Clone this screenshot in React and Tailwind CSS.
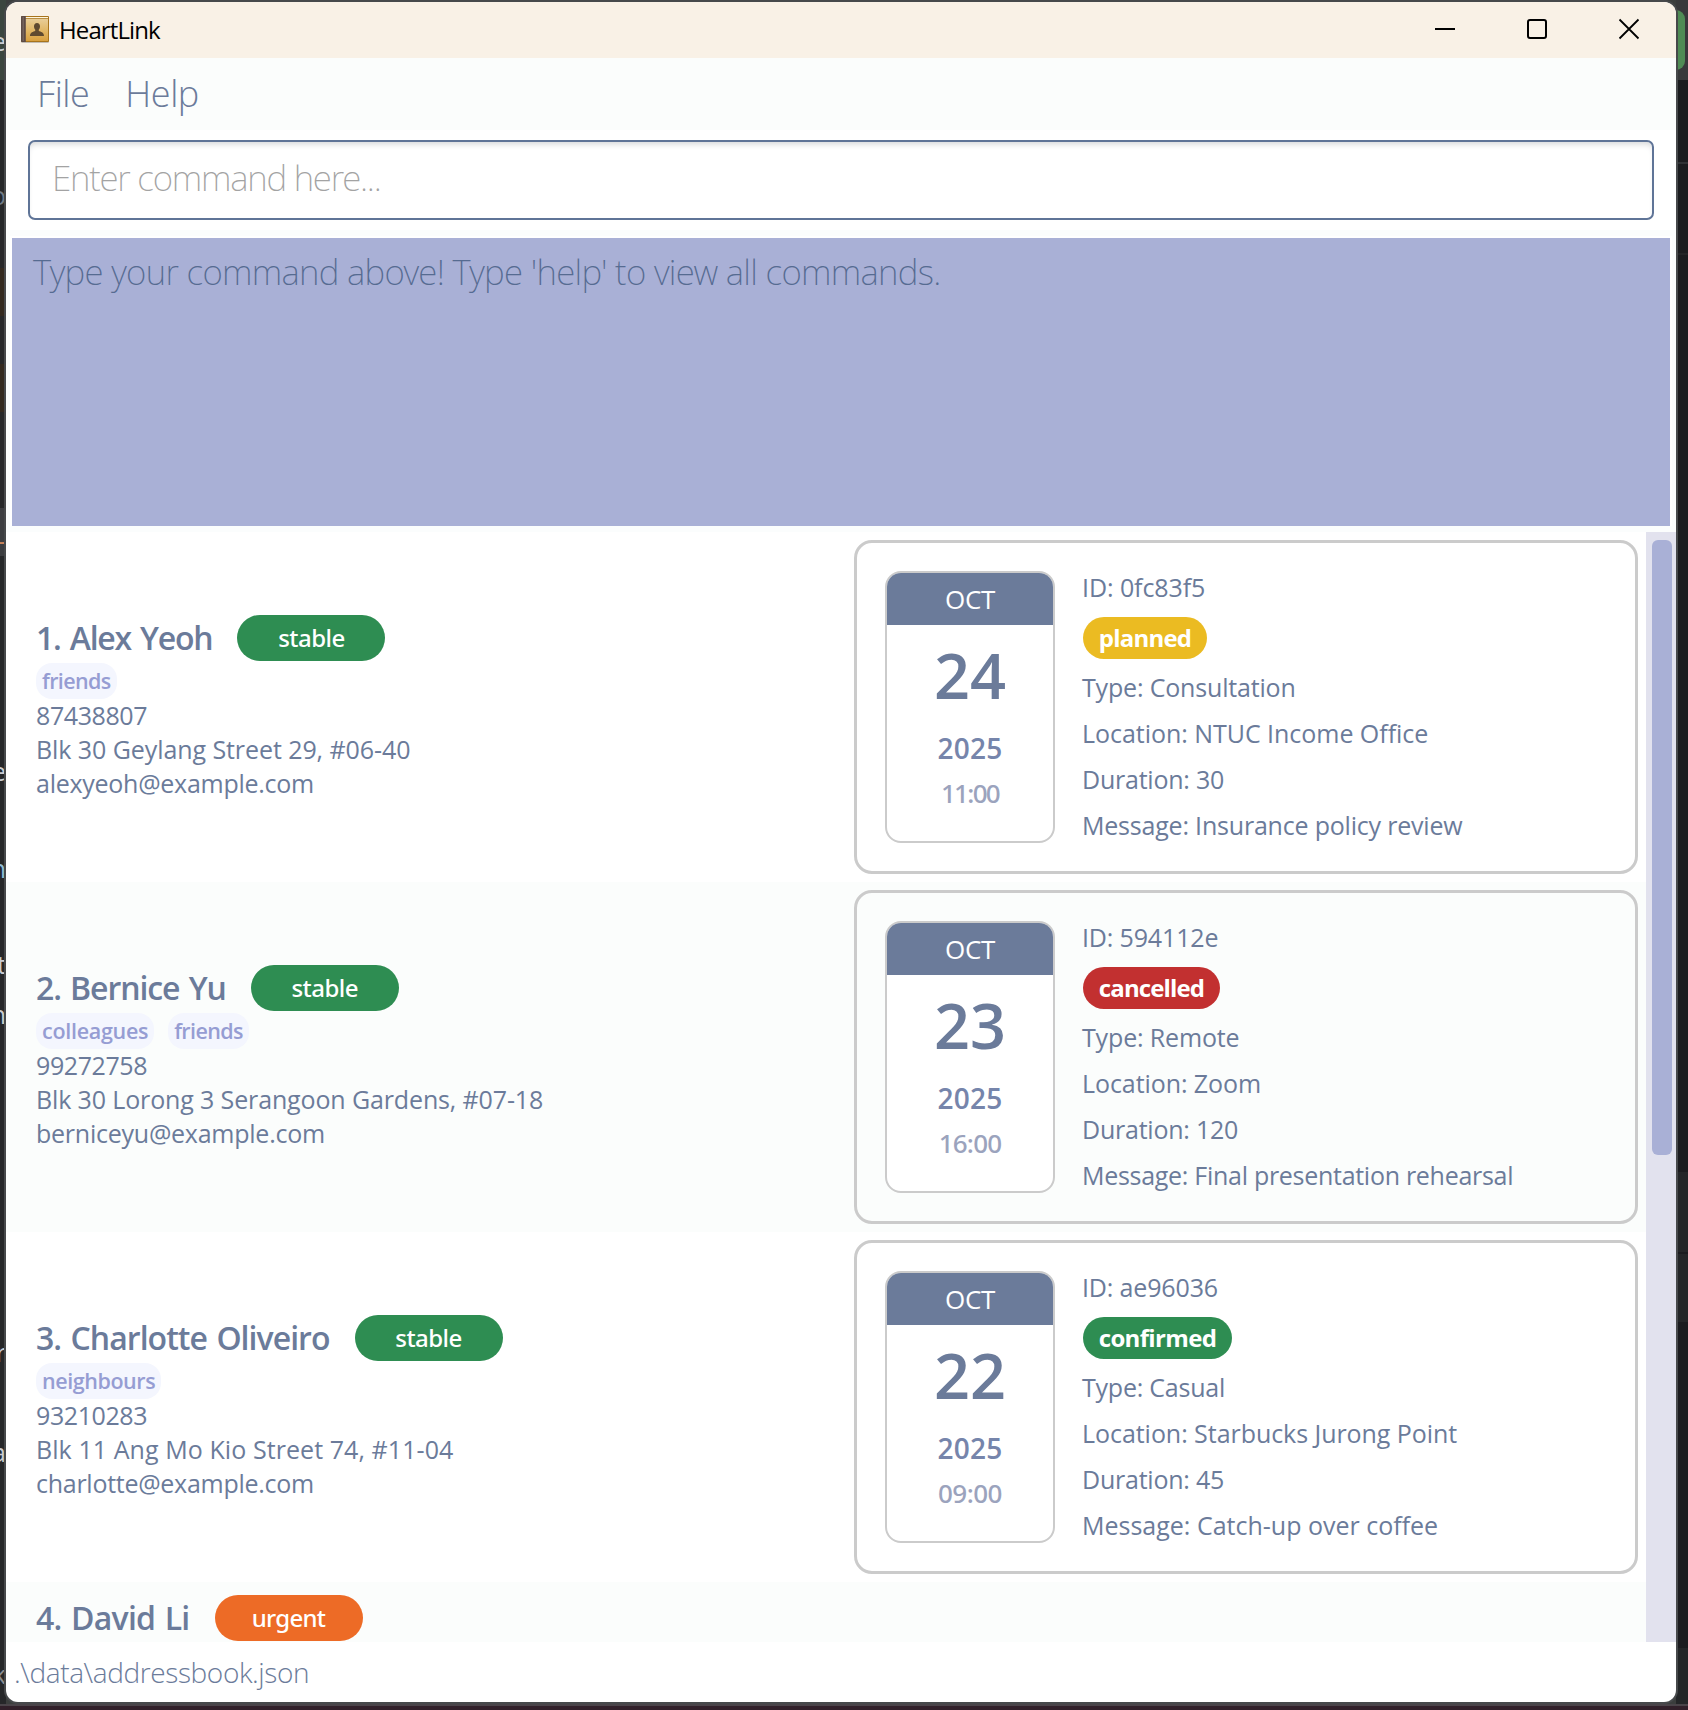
import React from "react";

const SANS = "font-['Open_Sans','Noto_Sans',sans-serif]";

const STATUS = { stable: "bg-[#2e8d52]", urgent: "bg-[#ed6b26]" };
const STATUS_TRACKING = { stable: "tracking-[-0.022em]", urgent: "tracking-[-0.03em]" };

const people = [
  {
    name: "1. Alex Yeoh",
    nameTracking: "tracking-[-0.038em]",
    status: "stable",
    tags: [["friends", "tracking-[-0.028em]"]],
    lines: [
      ["87438807", "tracking-[-0.016em]"],
      ["Blk 30 Geylang Street 29, #06-40", "tracking-[-0.003em]"],
      ["alexyeoh@example.com", "tracking-[-0.0106em]"],
    ],
    appt: {
      day: "24",
      time: "11:00",
      timeTracking: "tracking-[-0.065em]",
      id: ["ID: 0fc83f5", "tracking-[-0.003em]"],
      state: "planned",
      stateClass: "w-[124px] bg-[#ebbb22] tracking-[-0.033em]",
      rows: [
        ["Type: Consultation", "tracking-[-0.007em]"],
        ["Location: NTUC Income Office", "tracking-[-0.0015em]"],
        ["Duration: 30", "tracking-[-0.009em]"],
        ["Message: Insurance policy review", "tracking-[-0.008em]"],
      ],
    },
  },
  {
    name: "2. Bernice Yu",
    nameTracking: "tracking-[-0.034em]",
    status: "stable",
    tags: [
      ["colleagues", "tracking-[-0.0135em]"],
      ["friends", "tracking-[-0.028em]"],
    ],
    lines: [
      ["99272758", "tracking-[-0.016em]"],
      ["Blk 30 Lorong 3 Serangoon Gardens, #07-18", "tracking-[-0.0053em]"],
      ["berniceyu@example.com", "tracking-[-0.0097em]"],
    ],
    appt: {
      day: "23",
      time: "16:00",
      timeTracking: "tracking-[-0.03em]",
      id: ["ID: 594112e", "tracking-[-0.006em]"],
      state: "cancelled",
      stateClass: "w-[137px] bg-[#c23030] tracking-[-0.0362em]",
      rows: [
        ["Type: Remote", "tracking-[-0.006em]"],
        ["Location: Zoom", "tracking-[-0.003em]"],
        ["Duration: 120", "tracking-[-0.009em]"],
        ["Message: Final presentation rehearsal", "tracking-[-0.0114em]"],
      ],
    },
  },
  {
    name: "3. Charlotte Oliveiro",
    nameTracking: "tracking-[-0.03em]",
    status: "stable",
    tags: [["neighbours", "tracking-[-0.02em]"]],
    lines: [
      ["93210283", "tracking-[-0.016em]"],
      ["Blk 11 Ang Mo Kio Street 74, #11-04", "tracking-[0.003em]"],
      ["charlotte@example.com", "tracking-[-0.0108em]"],
    ],
    appt: {
      day: "22",
      time: "09:00",
      timeTracking: "tracking-[-0.02em]",
      id: ["ID: ae96036", "tracking-[-0.006em]"],
      state: "confirmed",
      stateClass: "w-[149px] bg-[#2e8d52] tracking-[-0.0272em]",
      rows: [
        ["Type: Casual", "tracking-[-0.009em]"],
        ["Location: Starbucks Jurong Point", "tracking-[-0.002em]"],
        ["Duration: 45", "tracking-[-0.009em]"],
        ["Message: Catch-up over coffee", "tracking-[0em]"],
      ],
    },
  },
];

function BookIcon() {
  return (
    <svg width="30" height="28" viewBox="0 0 30 28" className="shrink-0">
      <defs>
        <linearGradient id="cover" x1="0" y1="0" x2="0" y2="1">
          <stop offset="0" stopColor="#e8cd98" />
          <stop offset="0.5" stopColor="#e2b868" />
          <stop offset="1" stopColor="#d8a040" />
        </linearGradient>
      </defs>
      <rect x="1" y="24" width="28" height="3" rx="1.5" fill="#000" opacity="0.22" />
      <rect x="1" y="0" width="28" height="26" rx="1" fill="#a8741c" />
      <rect x="5" y="1" width="23" height="1.2" fill="#fff6dd" />
      <rect x="5" y="3" width="23" height="22" fill="url(#cover)" />
      <path d="M1 1 q0-1 1-1 H5.8 V26 H2 q-1 0-1-1z" fill="#5d4b46" />
      <rect x="2.6" y="1" width="1.2" height="24" fill="#7b6a63" />
      <path
        d="M17 7c-1.9 0-3 1.3-3 3.2 0 1.500.5 2.600 1.200 3.300v1.500c-1.800.7-5.200 1.300-5.200 5h14c0-3.700-3.400-4.300-5.200-5v-1.500c.7-.7 1.200-1.800 1.200-3.300C20 8.300 18.900 7 17 7z"
        fill="#5f4a30"
      />
    </svg>
  );
}

function TitleBar() {
  return (
    <div className="flex h-14 shrink-0 items-center bg-[#f9f1e6] pl-[14px] text-black">
      <BookIcon />
      <span className="ml-[9px] text-[24px] leading-[56px] tracking-[-0.0374em]">HeartLink</span>
      <div className="mr-9 ml-auto flex items-center gap-[70px] pb-[2px]">
        <svg width="22" height="22" viewBox="0 0 22 22">
          <path d="M1 11H21" stroke="#000" strokeWidth="2" />
        </svg>
        <svg width="22" height="22" viewBox="0 0 22 22">
          <rect x="2" y="2" width="18" height="18" rx="2" fill="none" stroke="#000" strokeWidth="2" />
        </svg>
        <svg width="22" height="22" viewBox="0 0 22 22">
          <path d="M1.500 1.500 20.500 20.500M20.500 1.500 1.500 20.500" stroke="#000" strokeWidth="1.800" />
        </svg>
      </div>
    </div>
  );
}

function Header({ name, tracking, status }) {
  return (
    <div className="flex h-[46px] shrink-0 items-center">
      <span className={`pb-[1px] text-[32px] leading-[44px] font-semibold [word-spacing:2px] ${tracking}`}>{name}</span>
      <span
        className={`ml-[25px] flex h-[46px] w-[148px] items-center justify-center rounded-[23px] font-['Noto_Sans'] text-[24px] font-medium text-white ${STATUS_TRACKING[status]} ${STATUS[status]}`}
      >
        {status}
      </span>
    </div>
  );
}

function Appointment({ appt }) {
  return (
    <div className="flex h-[334px] w-[784px] rounded-[18px] border-[3px] border-[#cbcbcb] p-7">
      <div className="flex w-[170px] shrink-0 flex-col items-center overflow-hidden rounded-[16px] border-2 border-[#cbcbcb] bg-white">
        <div className="flex h-[52px] w-full items-center justify-center bg-[#6b7b9a] text-[26px] tracking-[-0.0115em] text-white">
          OCT
        </div>
        <div className="mt-[10px] text-[63px] leading-[80px] font-semibold">{appt.day}</div>
        <div className="mt-[11px] text-[28px] leading-[44px] font-semibold tracking-[0.01em] text-[#7685ab]">2025</div>
        <div className={`font-['Noto_Sans'] text-[26px] leading-[46px] font-medium text-[#9ba3bd] ${appt.timeTracking}`}>
          {appt.time}
        </div>
      </div>
      <div className="ml-[27px] flex flex-col text-[25px] leading-8 whitespace-nowrap">
        <div className={appt.id[1]}>{appt.id[0]}</div>
        <div
          className={`mt-[14px] mb-3 ml-[1px] flex h-[42px] items-center justify-center rounded-full text-[24px] font-bold text-white ${appt.stateClass}`}
        >
          {appt.state}
        </div>
        <div className="flex flex-col gap-[14px]">
          {appt.rows.map(([text, tracking]) => (
            <div key={text} className={tracking}>
              {text}
            </div>
          ))}
        </div>
      </div>
    </div>
  );
}

function PersonRow({ person, shaded }) {
  return (
    <div className={`flex h-[350px] shrink-0 items-center justify-between pr-2 pl-[30px] ${shaded ? "bg-[#fbfdfc]" : "bg-white"}`}>
      <div className="flex flex-col pt-[2px] whitespace-nowrap">
        <Header name={person.name} tracking={person.nameTracking} status={person.status} />
        <div className="mt-[2px] flex gap-[14px]">
          {person.tags.map(([tag, tracking]) => (
            <span
              key={tag}
              className={`flex h-9 items-center rounded-[16px] bg-[#f4f6fe] px-[6px] text-[21.5px] font-semibold text-[#969dd3] ${tracking}`}
            >
              {tag}
            </span>
          ))}
        </div>
        <div className="-mt-px mb-px flex flex-col text-[25px] leading-[34px]">
          {person.lines.map(([text, tracking]) => (
            <span key={text} className={tracking}>
              {text}
            </span>
          ))}
        </div>
      </div>
      <Appointment appt={person.appt} />
    </div>
  );
}

function Fragment({ height, glyph, color = "text-[#c9ccd1]", bg = "bg-[#262729]" }) {
  return (
    <div className={`flex shrink-0 items-end justify-end overflow-hidden text-[25px] leading-8 ${bg} ${color}`} style={{ height }}>
      {glyph}
    </div>
  );
}

function LeftStrip() {
  return (
    <div className="flex w-[6px] shrink-0 flex-col overflow-hidden">
      <Fragment height={57} glyph="e" bg="bg-[#3b463f]" />
      <Fragment height={23} bg="bg-[#3b463f]" />
      <Fragment height={131} glyph="o" color="text-[#6f7a86]" />
      <Fragment height={57} />
      <Fragment height={48} bg="bg-[#33291f]" />
      <Fragment height={48} />
      <Fragment height={48} bg="bg-[#33291f]" />
      <Fragment height={96} />
      <Fragment height={48} glyph="-" color="text-[#c9835a]" bg="bg-[#3c3d40]" />
      <Fragment height={231} glyph="e" />
      <Fragment height={97} glyph="n" color="text-[#8fbbd6]" />
      <Fragment height={96} glyph="t" />
      <Fragment height={50} glyph="n" />
      <Fragment height={338} glyph="r" />
      <Fragment height={100} glyph="a" />
      <Fragment height={222} glyph="k" color="text-[#8b8d91]" />
      <Fragment height={14} />
    </div>
  );
}

function RightStrip() {
  return (
    <div className="flex w-3 shrink-0 flex-col bg-[#1b1c1f]">
      <div className="h-20 shrink-0 bg-[#38393b] pt-[10px]">
        <div className="h-[60px] w-[9px] rounded-r-[9px] bg-[#4f8c55]" />
      </div>
      <div className="mt-[82px] h-[2px] shrink-0 bg-[#303235]" />
      <div className="mt-[89px] h-[2px] shrink-0 bg-[#242527]" />
      <div className="mt-[917px] h-[80px] shrink-0 bg-[#242628]" />
      <div className="mt-[2px] h-[68px] shrink-0 bg-[#242628]" />
      <div className="mt-[326px] grow bg-[#242628]" />
    </div>
  );
}

export default function App() {
  return (
    <div className={`flex h-[1710px] w-[1688px] flex-col overflow-hidden bg-[#262729] text-[#6b7b9a] ${SANS}`}>
      <div className="flex h-[1704px] shrink-0">
        <LeftStrip />
        <div className="z-10 flex w-[1670px] shrink-0 flex-col bg-[#3b3e3d] pt-[2px] pb-[2px]">
          <div className="flex h-[1700px] flex-col overflow-hidden rounded-[12px] bg-white shadow-[0_0_0_2px_#47494b]">
            <TitleBar />
            <div className="flex h-[72px] shrink-0 items-center gap-[36px] bg-[#fbfdfc] pb-px pl-[31px] text-[36px] font-light">
              <span className="tracking-[-0.0126em]">File</span>
              <span className="tracking-[-0.012em]">Help</span>
            </div>
            <div className="h-[100px] shrink-0 bg-white px-[22px] py-[10px]">
              <div className="flex h-20 items-center rounded-[7px] border-2 border-[#5f7497] bg-white pb-[3px] pl-[22px] font-['Noto_Sans'] text-[35px] font-extralight tracking-[-0.035em] text-[#a3a3a3] shadow-[inset_0_5px_6px_-3px_#d4d6d8]">
                Enter command here...
              </div>
            </div>
            <div className="shrink-0 bg-[#fbfdfd] px-[4px] pt-[6px] pb-[6px]">
              <div className="bg-white p-[2px] pb-0">
                <div className="h-[288px] bg-[#a9b0d6] pt-[10px] pl-[21px] font-['Noto_Sans'] text-[35px] leading-[48px] font-extralight tracking-[-0.02em] whitespace-nowrap text-[#566b91]">
                  Type your command above! Type &apos;help&apos; to view all commands.
                </div>
              </div>
            </div>
            <div className="flex h-[1110px] shrink-0">
              <div className="flex w-[1640px] flex-col overflow-hidden">
                {people.map((person, i) => (
                  <PersonRow key={person.name} person={person} shaded={i % 2 === 1} />
                ))}
                <div className="h-[60px] shrink-0 overflow-hidden bg-[#fbfdfc] pt-[13px] pl-[30px]">
                  <Header name="4. David Li" tracking="tracking-[-0.024em]" status="urgent" />
                </div>
              </div>
              <div className="w-[30px] bg-[#e2e2ee] pt-2 pl-[6px]">
                <div className="h-[615px] w-5 rounded-[6px] bg-[#a9b0d6]" />
              </div>
            </div>
            <div className="h-[60px] pl-[8px] text-[28px] leading-[60px] font-light tracking-[-0.0138em]">
              .\data\addressbook.json
            </div>
          </div>
        </div>
        <RightStrip />
      </div>
      <div className="h-[2px] shrink-0 bg-[#4a4449]" />
      <div className="grow bg-[#32202a]" />
    </div>
  );
}
